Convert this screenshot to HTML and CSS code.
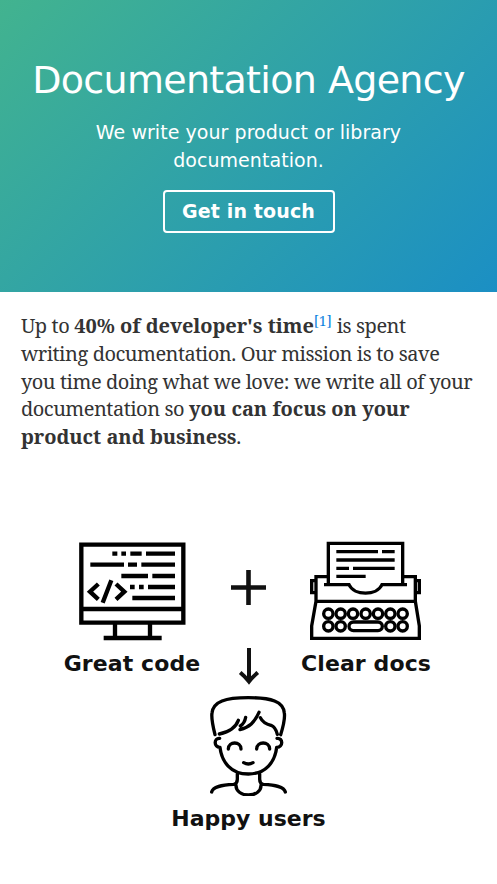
FILE: index.html
```html
<!DOCTYPE html>
<html lang="en">
<head>
<meta charset="utf-8">
<title>Documentation Agency</title>
<link rel="stylesheet" href="styles.css">
</head>
<body>
<header class="hero">
  <h1>Documentation Agency</h1>
  <p class="tagline">We write your product or library documentation.</p>
  <a class="button" href="#contact">Get in touch</a>
</header>
<main>
  <p class="intro">Up to <strong>40% of developer's time</strong><sup><a href="#source">[1]</a></sup> is spent writing documentation. Our mission is to save you time doing what we love: we write all of your documentation so <strong>you can focus on your product and business</strong>.</p>
  <section class="diagram">
    <figure class="item">
      <svg class="computer" width="108" height="99" viewBox="57 36 324 297" fill="none" stroke="#000" stroke-width="13">
        <path d="M64 44H370V278H64ZM64 237H370M165 278V324M270 278V324M131 324H305"/>
        <path d="M157 71H172M184 71H198M211 71H245M258 71H345M91 104H192M204 104H231M244 104H345M184 138H264M277 138H345M210 171H224M237 171H251M264 171H345M217 204H345"/>
        <path d="M115 162L90 185L115 208M168 162L193 185L168 208M154 151L128 218"/>
      </svg>
      <figcaption>Great code</figcaption>
    </figure>
    <div class="signs">
      <svg width="35" height="35" viewBox="0 0 35 35" fill="none" stroke="#111" stroke-width="4.6"><path d="M17.5 0V35M0 17.5H35"/></svg>
      <svg width="22" height="37" viewBox="0 0 22 37" fill="none" stroke="#111" stroke-width="4"><path d="M11 0V33"/><path d="M2.2 24.5Q7 28.5 11 33.5Q15 28.5 19.8 24.5"/></svg>
    </div>
    <figure class="item">
      <svg width="111" height="100" viewBox="45 33 333 300" fill="none" stroke="#000" stroke-width="10">
        <path d="M100 164V40H323V164M87 164H162C177 198 246 198 261 164H336"/>
        <path d="M124 65H249M261 65H299M124 90H299M124 115H162M174 115H299M124 139H212"/>
        <path d="M100 140H63V214H361V140H323M63 152H50V188H63M361 152H373V188H361M63 214L50 288V325H373V288L361 214"/>
        <g><circle cx="100" cy="251" r="14"/><circle cx="137" cy="251" r="14"/><circle cx="174" cy="251" r="14"/><circle cx="212" cy="251" r="14"/><circle cx="249" cy="251" r="14"/><circle cx="286" cy="251" r="14"/><circle cx="323" cy="251" r="14"/><circle cx="100" cy="289" r="14"/><circle cx="137" cy="289" r="14"/><circle cx="286" cy="289" r="14"/><circle cx="323" cy="289" r="14"/><rect x="162" y="276" width="100" height="26" rx="13"/></g>
      </svg>
      <figcaption>Clear docs</figcaption>
    </figure>
    <figure class="item result">
      <svg width="77" height="100" viewBox="135 18 231 300" fill="none" stroke="#000" stroke-width="10" stroke-linecap="round" stroke-linejoin="round">
        <path d="M150 134C142 102 139 82 141 69C145 34 181 23 250 23C319 23 355 34 358 69C360 82 357 102 347 134"/>
        <path d="M163 132C187 127 211 116 220 91M242 82Q239 100 226 108M225 119C253 112 268 98 282 67M286 83C293 98 306 103 318 106Q332 112 337 133"/>
        <path d="M164 145C146 143 146 173 165 172C170 215 197 252 250 252C303 252 330 215 335 172C355 173 355 143 336 145"/>
        <path d="M190 177C190 153 228 153 228 177M275 177C275 153 314 153 314 177M236 218Q250 226 264 218"/>
        <path d="M217 252V268Q217 281 206 283C170 285 144 289 140 306M284 252V268Q284 281 295 283C330 285 357 289 361 306M213 285C211 325 290 325 288 285"/>
      </svg>
      <figcaption>Happy users</figcaption>
    </figure>
  </section>
</main>
</body>
</html>
```
FILE: styles.css
```css
* { box-sizing: border-box; }
body { margin: 0; background: #fff; color: #333; }
h1, p, figure { margin: 0; }
svg { display: block; }
.hero {
  height: 292px;
  padding: 52px 20px 0;
  text-align: center;
  color: #fff;
  font-family: "DejaVu Sans", sans-serif;
  background: linear-gradient(135deg, #42b38f, #1b8fc4);
}
h1 { font-size: 38px; line-height: 56px; font-weight: 400; letter-spacing: -0.7px; word-spacing: 0.5px; white-space: nowrap; }
.tagline { width: 340px; margin: 10px auto 16px; font-size: 19px; line-height: 28px; letter-spacing: 0.05px; }
.button {
  display: inline-block;
  width: 172px;
  height: 43px;
  border: 2px solid #fff;
  border-radius: 4px;
  color: #fff;
  font-size: 19px;
  font-weight: 700;
  letter-spacing: 0.15px;
  line-height: 39px;
  text-decoration: none;
}
.intro {
  padding: 20px 21px 0;
  font-family: "Noto Serif", "Droid Serif", serif;
  font-size: 20px;
  line-height: 27.75px;
  letter-spacing: -0.5px;
  word-spacing: 0.3px;
}
.intro strong { letter-spacing: -0.07px; word-spacing: 0.2px; }
.intro sup { font-size: 14px; line-height: 0; letter-spacing: 0; position: relative; top: 1px; }
.intro a { color: #0d84df; text-decoration: none; }
.diagram {
  display: grid;
  grid-template-columns: 150px 84px 150px;
  justify-content: center;
  margin-top: 90px;
  font-family: "DejaVu Sans", sans-serif;
}
.item, .signs { display: flex; flex-direction: column; align-items: center; }
.item svg { height: 100px; }
.item .computer { height: 99px; margin: 1px 0 0 2px; }
.item figcaption { margin: 10px 0 0 1px; font-size: 22px; line-height: 26px; font-weight: 700; letter-spacing: 0.1px; color: #111; white-space: nowrap; }
.signs { padding-top: 29px; gap: 43px; }
.result { grid-column: 1 / -1; margin-top: 11px; }
.result figcaption { margin-left: 0; letter-spacing: 0; }
```
